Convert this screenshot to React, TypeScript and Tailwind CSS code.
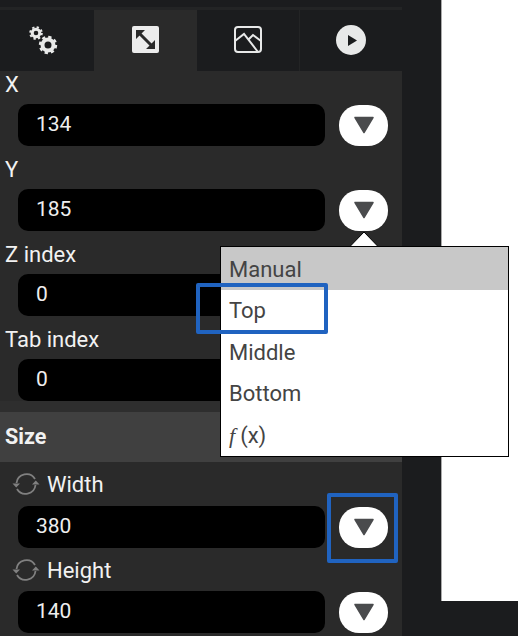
const font = { fontFamily: 'Roboto, sans-serif' };

function GearsIcon() {
  return (
    <svg width="30" height="30" viewBox="0 0 30 30" fill="none" stroke="#e8e9e9">
      <circle cx="8" cy="8" r="3.800" strokeWidth="3" />
      <circle cx="8" cy="8" r="5.800" strokeWidth="2" strokeDasharray="2.300 2.250" />
      <circle cx="20" cy="20" r="5.500" strokeWidth="4" />
      <circle cx="20" cy="20" r="8" strokeWidth="2.400" strokeDasharray="3.300 2.980" />
    </svg>
  );
}

function ResizeIcon() {
  return (
    <svg width="27" height="27" viewBox="0 0 27 27">
      <rect width="27" height="27" rx="2" fill="#ececec" />
      <path d="M7 7 L20 20" stroke="#2a2a2a" strokeWidth="3" />
      <path d="M4 13 V4 H13 Z M23 14 V23 H14 Z" fill="#2a2a2a" />
    </svg>
  );
}

function ImageIcon() {
  return (
    <svg width="28" height="27" viewBox="0 0 28 27" fill="none" stroke="#e8e9e9" strokeWidth="2">
      <rect x="1" y="1" width="26" height="25" rx="3" />
      <path d="M1 15 L10 8 L24 26 M15 13 L19 9 L27 15" />
    </svg>
  );
}

function PlayIcon() {
  return (
    <svg width="30" height="30" viewBox="0 0 30 30">
      <circle cx="15" cy="15" r="15" fill="#e8e9e9" />
      <path d="M12 10 L21 15.500 L12 21 Z" fill="#1b1c1e" />
    </svg>
  );
}

function CycleIcon() {
  return (
    <svg width="28" height="24" viewBox="0 0 28 24" fill="none" stroke="#808080" strokeWidth="1.800" className="shrink-0">
      <path d="M4.500 11 A10 10 0 0 1 23 7" />
      <path d="M23.500 13 A10 10 0 0 1 5 17" />
      <path d="M0.500 11.500 H8 L4.200 15.500 Z M27.500 12.500 H20 L23.800 8.500 Z" fill="#808080" stroke="none" />
    </svg>
  );
}

function CaretButton() {
  return (
    <button className="w-[49px] h-[41px] rounded-[20px] bg-white flex items-center justify-center">
      <svg width="22" height="18" viewBox="0 0 22 18">
        <path d="M2 1.500 H20 L11 16.500 Z" fill="#4a4b4d" stroke="#4a4b4d" strokeWidth="1.500" strokeLinejoin="round" />
      </svg>
    </button>
  );
}

function ValueRow({ value }: { value: string }) {
  return (
    <div className="flex items-center h-[42px] pl-[18px]">
      <div className="w-[307px] h-[42px] rounded-[10px] bg-black flex items-center pl-[18px] text-[21px] text-[#eeeeee]">
        {value}
      </div>
      <div className="ml-[14px]">
        <CaretButton />
      </div>
    </div>
  );
}

function Field({ label, value }: { label: string; value: string }) {
  return (
    <div>
      <div className="h-[32px] pl-[5px] pb-[7px] flex items-center text-[22px] leading-none text-[#f2f2f2]">{label}</div>
      <ValueRow value={value} />
    </div>
  );
}

function SizeField({ label, value, height }: { label: string; value: string; height: string }) {
  return (
    <div>
      <div className={`${height} pl-[12px] flex items-center gap-[7px] text-[22px] leading-none text-[#f2f2f2]`}>
        <CycleIcon />
        <span className="pt-[2px]">{label}</span>
      </div>
      <ValueRow value={value} />
    </div>
  );
}

export default function App() {
  return (
    <div style={font} className="relative w-[518px] h-[636px] overflow-hidden bg-[#1b1c1e] flex">
      <div className="w-[402px] mt-[7px] bg-[#2a2a2a] shrink-0 flex flex-col">
        <div className="h-[3px] bg-[#232425]" />
        <div className="flex h-[61px]">
          <div className="w-[94px] bg-[#1b1c1e] flex items-center justify-center pr-[8px] pb-[2px]"><GearsIcon /></div>
          <div className="w-[103px] flex items-center justify-center pb-[2px]"><ResizeIcon /></div>
          <div className="w-[103px] bg-[#1b1c1e] border-r border-[#232425] flex items-center justify-center pb-[2px]"><ImageIcon /></div>
          <div className="w-[102px] bg-[#1b1c1e] flex items-center justify-center pb-[2px]"><PlayIcon /></div>
        </div>
        <div className="flex flex-col gap-[11px] h-[330px] pt-[1px]">
          <Field label="X" value="134" />
          <Field label="Y" value="185" />
          <Field label="Z index" value="0" />
          <Field label="Tab index" value="0" />
        </div>
        <div className="h-[11px] bg-[#2e2e2e]" />
        <div className="h-[50px] bg-[#404040] flex items-center pl-[5px] pt-[1px] text-[21.500px] font-bold text-[#f2f2f2]">Size</div>
        <SizeField label="Width" value="380" height="h-[44px]" />
        <SizeField label="Height" value="140" height="h-[43px]" />
      </div>

      <div className="ml-[39px] w-[77px] h-[601px] bg-white border-l border-[#aaaaaa]" />

      {/* popup menu */}
      <svg width="32" height="17" viewBox="0 0 32 17" className="absolute left-[348px] top-[231px]">
        <path d="M1 16.500 L16 1 L31 16.500 Z" fill="#ffffff" stroke="#000000" strokeWidth="1" />
      </svg>
      <div className="absolute left-[220px] top-[246px] w-[289px] h-[211px] bg-white border border-black text-[22px] text-[#444444]">
        <div className="h-[43px] bg-[#c8c8c8] pl-[8px] pt-[1px] flex items-center">Manual</div>
        <div className="h-[41px] pl-[8px] flex items-center">Top</div>
        <div className="h-[42px] pl-[8px] flex items-center">Middle</div>
        <div className="h-[41px] pl-[8px] flex items-center">Bottom</div>
        <div className="h-[42px] pl-[8px] flex items-center">
          <span style={{ fontFamily: '"Liberation Serif", serif' }} className="italic pr-[5px]">f</span>(x)
        </div>
      </div>

      {/* annotation boxes */}
      <div className="absolute left-[196px] top-[283px] w-[132px] h-[51px] border-[4px] border-[#2063c0] rounded-[2px]" />
      <div className="absolute left-[327px] top-[493px] w-[71px] h-[70px] border-[4px] border-[#2063c0] rounded-[2px]" />
    </div>
  );
}
